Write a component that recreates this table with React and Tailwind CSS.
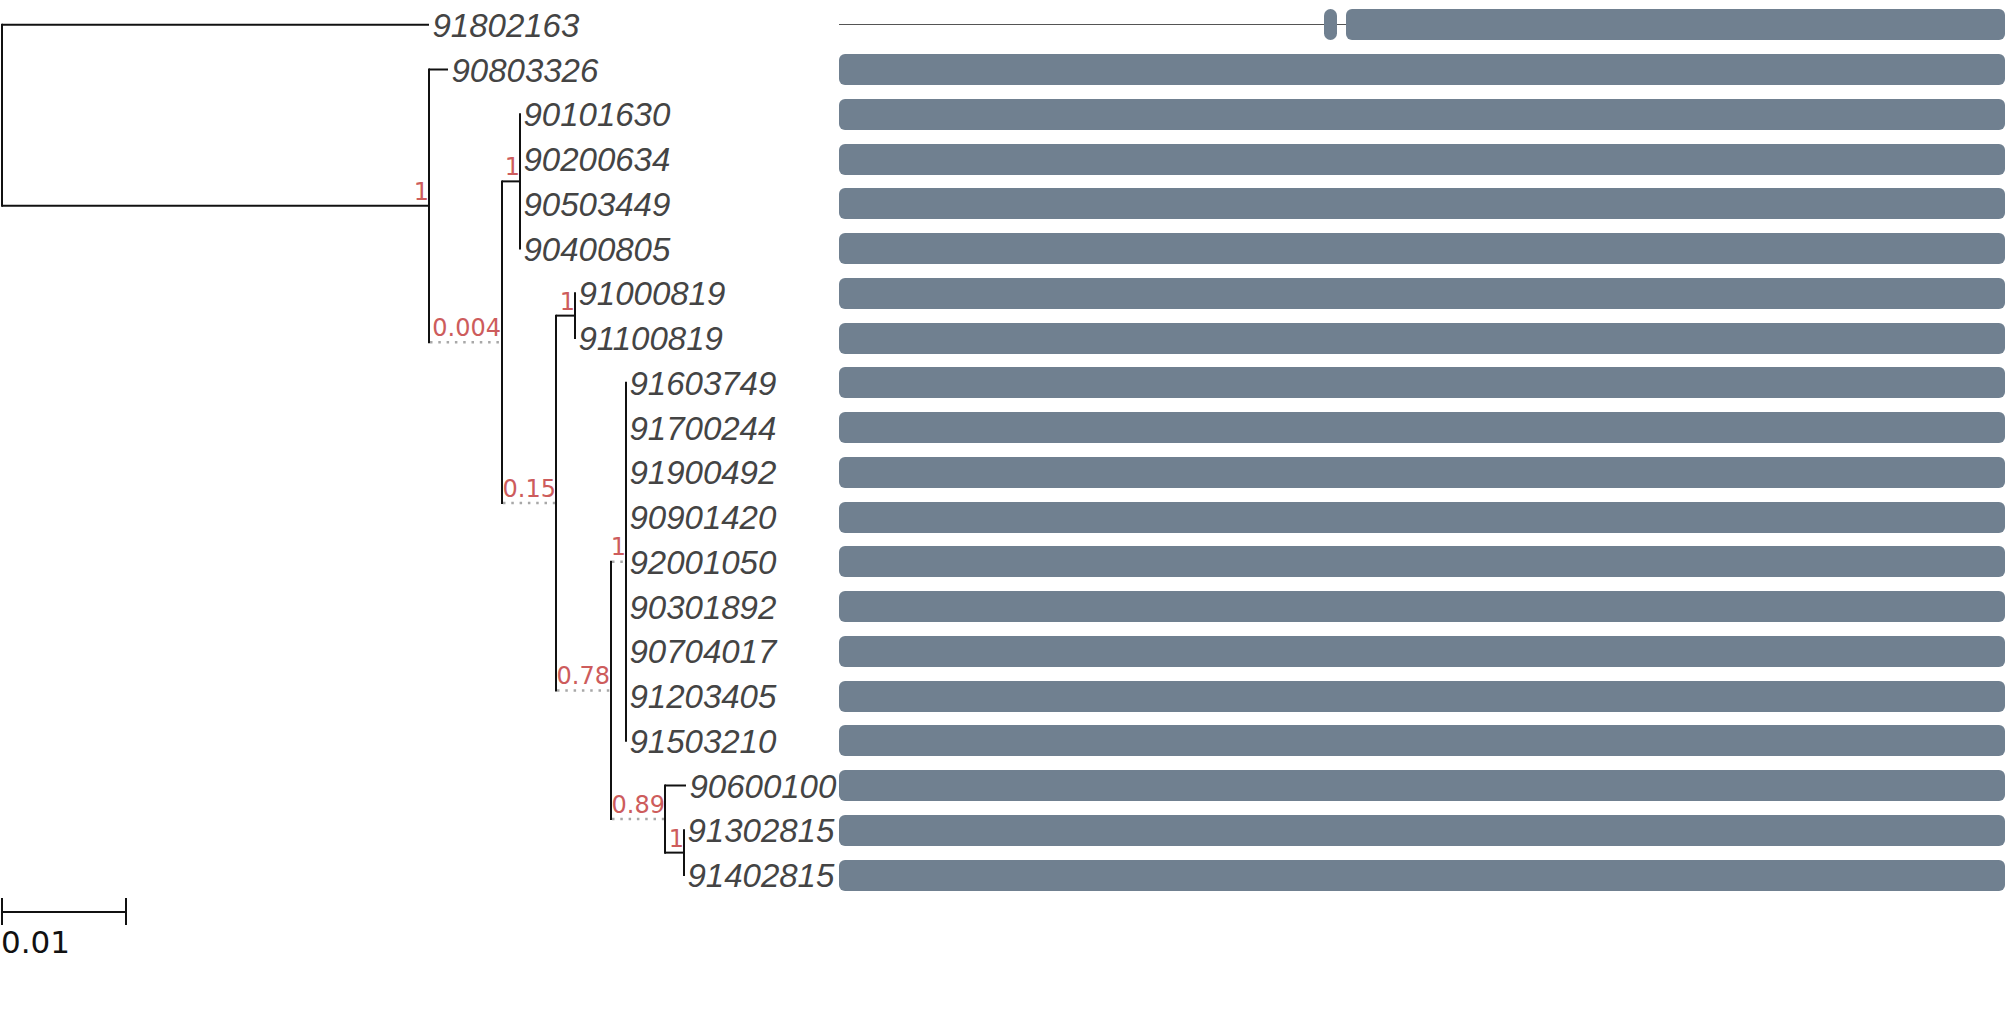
const rowY = (i) => 24.75 + 44.75 * i;

const leaves = [
  { name: "91802163", tip: 429 },
  { name: "90803326", tip: 448 },
  { name: "90101630", tip: 520 },
  { name: "90200634", tip: 520 },
  { name: "90503449", tip: 520 },
  { name: "90400805", tip: 520 },
  { name: "91000819", tip: 575 },
  { name: "91100819", tip: 575 },
  { name: "91603749", tip: 626 },
  { name: "91700244", tip: 626 },
  { name: "91900492", tip: 626 },
  { name: "90901420", tip: 626 },
  { name: "92001050", tip: 626 },
  { name: "90301892", tip: 626 },
  { name: "90704017", tip: 626 },
  { name: "91203405", tip: 626 },
  { name: "91503210", tip: 626 },
  { name: "90600100", tip: 686 },
  { name: "91302815", tip: 684 },
  { name: "91402815", tip: 684 },
];

// internal nodes, y computed from children
const C = (rowY(2) + rowY(5)) / 2;
const E = (rowY(6) + rowY(7)) / 2;
const G = (rowY(8) + rowY(16)) / 2;
const I = (rowY(18) + rowY(19)) / 2;
const H = (rowY(17) + I) / 2;
const F = (G + H) / 2;
const D = (E + F) / 2;
const B = (C + D) / 2;
const A = (rowY(1) + B) / 2;

// vertical spans: [x, y1, y2]
const verticals = [
  [2, rowY(0), A],
  [429, rowY(1), B],
  [502, C, D],
  [520, rowY(2), rowY(5)],
  [556, E, F],
  [575, rowY(6), rowY(7)],
  [611, G, H],
  [626, rowY(8), rowY(16)],
  [665, rowY(17), I],
  [684, rowY(18), rowY(19)],
];

// horizontal branches: [x1, x2, y, dotted]
const branches = [
  [2, 429, rowY(0), false],
  [2, 429, A, false],
  [429, 448, rowY(1), false],
  [429, 502, B, true],
  [502, 520, C, false],
  [502, 556, D, true],
  [556, 575, E, false],
  [556, 611, F, true],
  [611, 626, G, true],
  [611, 665, H, true],
  [665, 686, rowY(17), false],
  [665, 684, I, false],
];

// support values: [text, right x, branch y]
const support = [
  ["1", 429, A],
  ["0.004", 501, B],
  ["1", 520, C],
  ["0.15", 556, D],
  ["1", 575, E],
  ["0.78", 610, F],
  ["1", 626, G - 1],
  ["0.89", 665, H],
  ["1", 684, I],
];

const Tree = () => (
  <svg width="839" height="1023" className="shrink-0 block">
    {verticals.map(([x, y1, y2], i) => (
      <line key={"v" + i} x1={x} x2={x} y1={y1 - 1} y2={y2 + 1} stroke="#111" strokeWidth="2" />
    ))}
    {branches.map(([x1, x2, y, dotted], i) =>
      dotted ? (
        <line key={"h" + i} x1={x1 + 1} x2={x2 - 1} y1={y} y2={y} stroke="#a8a8a8" strokeWidth="2.5" strokeDasharray="2.5 5.8" />
      ) : (
        <line key={"h" + i} x1={x1} x2={x2} y1={y} y2={y} stroke="#111" strokeWidth="2" />
      )
    )}
    {leaves.map((l, i) => (
      <text
        key={l.name}
        x={l.tip + 3.5}
        y={rowY(i) + 12}
        fill="#444"
        fontSize="33"
        fontStyle="italic"
        fontFamily="'Liberation Sans', Arial, sans-serif"
      >
        {l.name}
      </text>
    ))}
    {support.map(([t, x, y], i) => (
      <text
        key={"s" + i}
        x={x}
        y={y - 6}
        textAnchor="end"
        fill="#cd5c5c"
        fontSize="24"
        fontFamily="'DejaVu Sans', sans-serif"
      >
        {t}
      </text>
    ))}
    {/* scale bar */}
    <line x1="2" x2="126" y1="912" y2="912" stroke="#111" strokeWidth="2" />
    <line x1="2" x2="2" y1="898" y2="925" stroke="#111" strokeWidth="2" />
    <line x1="126" x2="126" y1="898" y2="925" stroke="#111" strokeWidth="2" />
    <text x="1" y="953" fill="#111" fontSize="31" fontFamily="'DejaVu Sans', sans-serif">
      0.01
    </text>
  </svg>
);

export default function App() {
  return (
    <div className="flex w-[2007px] h-[1023px] bg-white overflow-hidden">
      <Tree />
      <div className="flex flex-col shrink-0 w-[1166px] pt-[9.25px] gap-[13.75px]">
        <div className="flex items-center w-[1166px] h-[31px]">
          <div className="w-[485px] shrink-0 h-px bg-[#555]" />
          <div className="w-[13px] shrink-0 h-full rounded-full bg-[#708090]" />
          <div className="w-[9px] shrink-0 h-px bg-[#555]" />
          <div className="w-[659px] shrink-0 h-full rounded-[6px] bg-[#708090]" />
        </div>
        {leaves.slice(1).map((l) => (
          <div key={l.name} className="h-[31px] w-full rounded-[6px] bg-[#708090]" />
        ))}
      </div>
    </div>
  );
}
